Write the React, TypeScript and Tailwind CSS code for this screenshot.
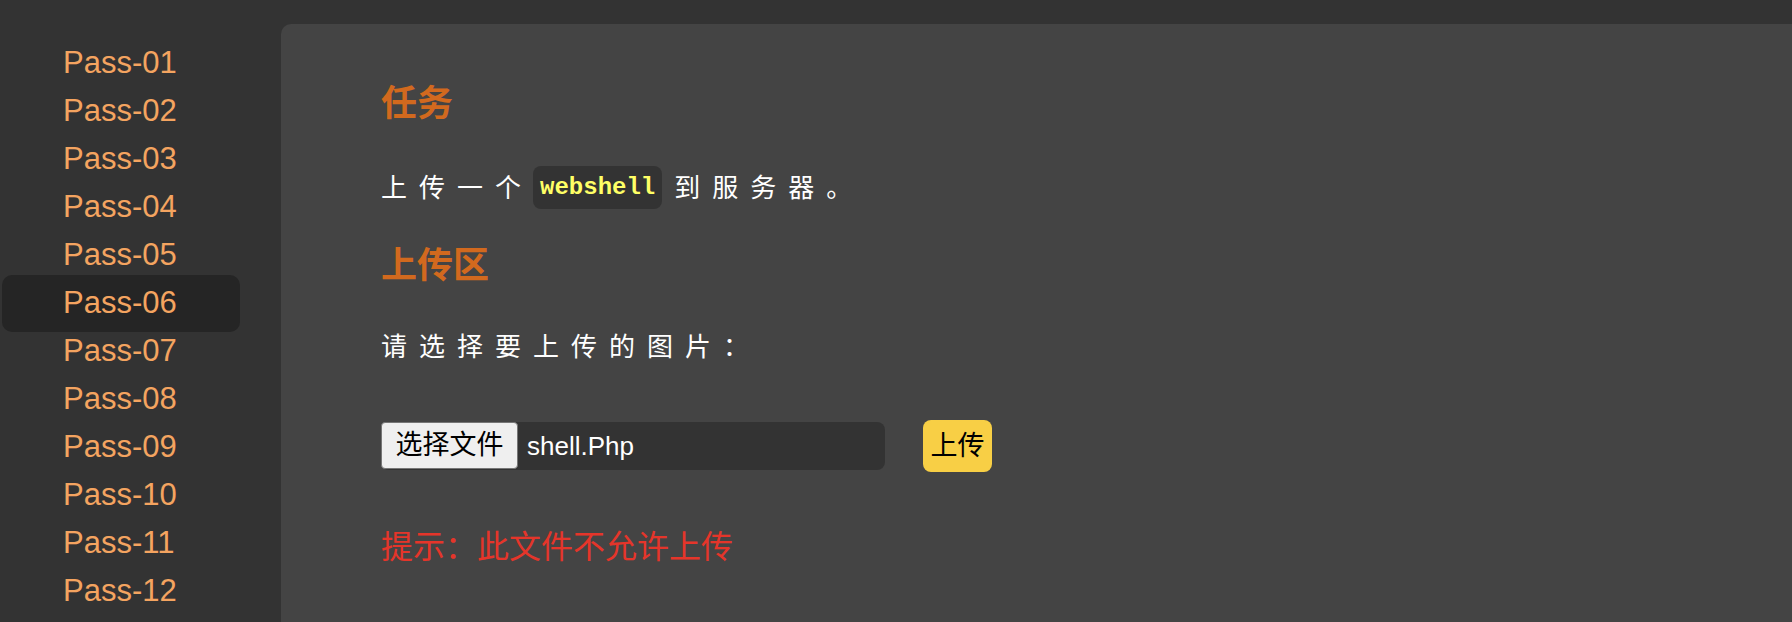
const passes = Array.from({ length: 12 }, (_, i) => `Pass-${String(i + 1).padStart(2, "0")}`);
const active = "Pass-06";

const font = "font-['Liberation_Sans','Noto_Sans_CJK_SC',sans-serif]";

const Sidebar = () => {
  return (
    <div className="w-[281px] shrink-0 pt-[39px]">
      {passes.map((p) =>
        p === active ? (
          <div
            key={p}
            className="ml-[2px] w-[238px] -my-[4.5px] py-[4.5px] pl-[61px] rounded-[10px] bg-[#252525] text-[31px] leading-[48px] text-[#f4a460]"
          >
            {p}
          </div>
        ) : (
          <div key={p} className="pl-[63px] text-[31px] leading-[48px] text-[#f4a460]">
            {p}
          </div>
        )
      )}
    </div>
  );
};

export default function App() {
  return (
    <div className={`flex h-[622px] overflow-hidden bg-[#333333] ${font}`}>
      <Sidebar />
      <div className="mt-[24px] flex-1 rounded-tl-[10px] bg-[#444444] pl-[100px] pt-[56px]">
        <h2 className="text-[36px] leading-[48px] font-bold text-[#d2691e]">任务</h2>

        <div className="mt-[38px] flex h-[43px] items-center text-[26px] leading-[26px] text-white">
          <span className="tracking-[12px]">上传一个</span>
          <code className="flex h-[43px] items-center rounded-[8px] bg-[#333333] px-[7px] font-['Liberation_Mono',monospace] text-[24px] font-bold text-[#ffff66]">
            webshell
          </code>
          <span className="ml-[12px] tracking-[12px]">到服务器。</span>
        </div>

        <h2 className="mt-[33px] text-[36px] leading-[48px] font-bold text-[#d2691e]">上传区</h2>

        <p className="mt-[44px] text-[26px] leading-[26px] tracking-[12px] text-white">请选择要上传的图片：</p>

        <div className="mt-[60px] flex items-center">
          <div className="flex h-[48px] w-[504px] items-center rounded-[8px] bg-[#333333]">
            <button className="h-[47px] w-[137px] self-start rounded-[4px] border border-[#767676] bg-[#efefef] text-[27px] text-black">
              选择文件
            </button>
            <span className="pl-[9px] text-[26px] text-white">shell.Php</span>
          </div>
          <button className="ml-[38px] h-[52px] w-[69px] rounded-[8px] bg-[#f8cf45] text-[27px] text-black">
            上传
          </button>
        </div>

        <p className="mt-[59px] text-[32px] leading-[32px] text-[#e5352a]">提示：此文件不允许上传</p>
      </div>
    </div>
  );
}
